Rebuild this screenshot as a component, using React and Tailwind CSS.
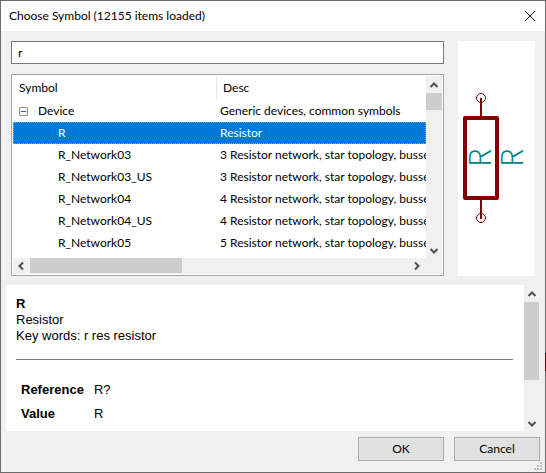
import { useState } from "react";

const rows = [
  ["R", "Resistor"],
  ["R_Network03", "3 Resistor network, star topology, busse"],
  ["R_Network03_US", "3 Resistor network, star topology, busse"],
  ["R_Network04", "4 Resistor network, star topology, busse"],
  ["R_Network04_US", "4 Resistor network, star topology, busse"],
  ["R_Network05", "5 Resistor network, star topology, busse"],
];

const arrows = {
  up: "M4.5 10 L8 6.5 L11.5 10",
  down: "M4.5 7 L8 10.5 L11.5 7",
  left: "M10 4.5 L6.5 8 L10 11.5",
  right: "M6 4.5 L9.5 8 L6 11.5",
};

function ArrowButton({ dir, label }) {
  const upright = dir === "up" || dir === "down";
  return (
    <button
      type="button"
      aria-label={label}
      className={upright ? "flex h-[17px] w-4 shrink-0 items-end" : "flex h-4 w-[17px] shrink-0"}
    >
      <svg viewBox="0 0 16 16" className="size-4" fill="none" stroke="#505050" strokeWidth="2">
        <path d={arrows[dir]} />
      </svg>
    </button>
  );
}

function SymbolPreview() {
  return (
    <svg viewBox="0 0 77 235" className="h-[235px] w-full" fill="none" stroke="#840000">
      <circle cx="23" cy="57" r="4.5" strokeWidth="1" />
      <circle cx="23" cy="177" r="4.5" strokeWidth="1" />
      <path d="M23 57V77M23 157V178" strokeWidth="2" />
      <rect x="7" y="77" width="32" height="80" strokeWidth="4" strokeLinejoin="round" />
      <g fill="#008484" stroke="none" className="font-['Noto_Sans_CJK_SC',sans-serif] text-[30px] font-light">
        <text transform="translate(33 126) rotate(-90)">R</text>
        <text transform="translate(65 126) rotate(-90)">R</text>
      </g>
    </svg>
  );
}

export default function App() {
  const [query, setQuery] = useState("r");
  return (
    <main className="relative flex min-h-screen flex-col border border-[#6b6b6b] bg-[#f0f0f0] font-['Lato','Open_Sans',sans-serif] text-[12px] leading-4 text-black">
      <span className="absolute top-[352px] -right-px h-[18px] w-px bg-[#4a0c10]" />
      <header className="flex h-[30px] items-center justify-between bg-white pr-[7px] pl-2">
        <h1>Choose Symbol (12155 items loaded)</h1>
        <button type="button" aria-label="Close" className="flex size-4 items-center justify-center">
          <svg viewBox="0 0 16 16" className="size-4" fill="none" stroke="#111" strokeWidth="1">
            <path d="M3 3L13 13M13 3L3 13" />
          </svg>
        </button>
      </header>

      <div className="flex gap-3.5 px-2.5 pt-2.5">
        <div className="flex min-w-0 flex-1 flex-col gap-2.5">
          <input
            aria-label="Filter"
            value={query}
            onChange={(e) => setQuery(e.target.value)}
            className="h-[23px] w-full border border-[#7a7a7a] bg-white px-1.5 outline-none"
          />
          <div className="flex h-[202px] border border-[#a5a5a5] bg-white p-px">
            <div className="flex min-w-0 flex-1 flex-col justify-between">
              <div className="overflow-hidden">
                <table className="w-full table-fixed border-separate border-spacing-0 whitespace-nowrap">
                  <thead>
                    <tr className="h-6 text-left">
                      <th className="w-[204px] border-r border-[#e5e5e5] p-0 pl-1.5 font-normal">Symbol</th>
                      <th className="p-0 pl-1.5 font-normal">Desc</th>
                    </tr>
                  </thead>
                  <tbody>
                    <tr className="h-[22px]">
                      <td className="p-0 pl-1.5">
                        <div className="flex items-center gap-2.5">
                          <button type="button" aria-label="Collapse Device" className="flex size-[9px] items-center justify-center rounded-[1px] border border-[#919191] bg-[#f7f7f7]">
                            <span className="h-px w-[5px] bg-[#3f5aa8]" />
                          </button>
                          Device
                        </div>
                      </td>
                      <td className="overflow-hidden p-0 pl-[3px]">Generic devices, common symbols</td>
                    </tr>
                    {rows.map(([name, desc], i) => (
                      <tr
                        key={name}
                        className={
                          i === 0
                            ? "h-[22px] bg-[#0078d7] text-white outline-1 -outline-offset-1 outline-dotted outline-[#ff8728]"
                            : "h-[22px]"
                        }
                      >
                        <td className="overflow-hidden p-0 pl-[45px]">{name}</td>
                        <td className="overflow-hidden p-0 pl-[3px]">{desc}</td>
                      </tr>
                    ))}
                  </tbody>
                </table>
              </div>
              <div className="flex h-4 bg-[#f0f0f0]">
                <ArrowButton dir="left" label="Scroll left" />
                <div className="flex-1">
                  <div className="h-[15px] w-2/5 bg-[#cdcdcd]" />
                </div>
                <ArrowButton dir="right" label="Scroll right" />
              </div>
            </div>
            <div className="flex w-4 flex-col bg-[#f0f0f0]">
              <ArrowButton dir="up" label="Scroll list up" />
              <div className="flex-1">
                <div className="h-[17px] bg-[#cdcdcd]" />
              </div>
              <ArrowButton dir="down" label="Scroll list down" />
              <div className="h-4" />
            </div>
          </div>
        </div>
        <div className="w-[77px] bg-white">
          <SymbolPreview />
        </div>
      </div>

      <section className="mx-[5px] mt-[9px] flex h-[146px] bg-white font-['Liberation_Sans',Arial,sans-serif] text-[13px]">
        <div className="flex-1 pt-[11px] pr-[11px] pl-2.5">
          <h2 className="font-bold">R</h2>
          <p>Resistor</p>
          <p>Key words: r res resistor</p>
          <hr className="mt-[15px] border-[#808080]" />
          <table className="mt-[18px] ml-[5px] text-left">
            <tbody>
              <tr className="h-6">
                <th className="p-0 pr-2.5 font-bold">Reference</th>
                <td className="p-0">R?</td>
              </tr>
              <tr className="h-6">
                <th className="p-0 pr-2.5 font-bold">Value</th>
                <td className="p-0">R</td>
              </tr>
            </tbody>
          </table>
        </div>
        <div className="flex w-4 flex-col bg-[#f0f0f0]">
          <ArrowButton dir="up" label="Scroll details up" />
          <div className="flex-1">
            <div className="h-[78px] w-[15px] bg-[#cdcdcd]" />
          </div>
          <ArrowButton dir="down" label="Scroll details down" />
        </div>
      </section>

      <footer className="flex justify-end gap-2.5 px-[5px] pt-1.5">
        <button type="button" className="h-6 w-[86px] border border-[#adadad] bg-[#e1e1e1]">OK</button>
        <button type="button" className="h-6 w-[86px] border border-[#adadad] bg-[#e1e1e1]">Cancel</button>
      </footer>
      <svg viewBox="0 0 8 8" className="absolute right-[3px] bottom-0.5 size-2" fill="#bfbfbf">
        <path d="M6 0h2v2h-2zM3 3h2v2h-2zM6 3h2v2h-2zM0 6h2v2h-2zM3 6h2v2h-2zM6 6h2v2h-2z" />
      </svg>
    </main>
  );
}
